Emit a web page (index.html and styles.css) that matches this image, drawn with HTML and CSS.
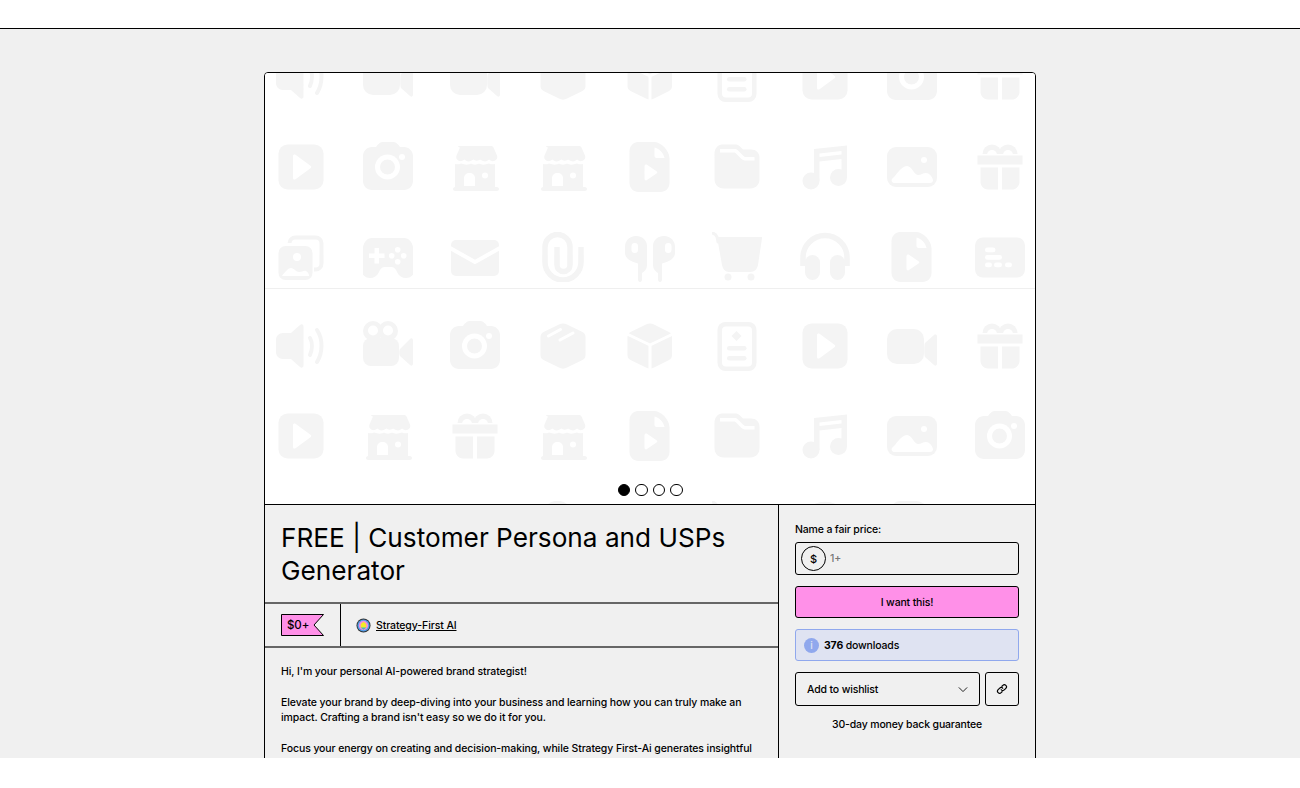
FILE: index.html
```html
<!DOCTYPE html>
<html lang="en">
<head>
  <meta charset="UTF-8" />
  <title>FREE | Customer Persona and USPs Generator</title>
  <link rel="stylesheet" href="styles.css">
</head>
<body>
  <svg class="sprites" width="0" height="0">
    <defs>
      <symbol id="i-play" viewBox="0 0 50 50"><rect x="2.5" y="2.5" width="45" height="45" rx="9"/><path class="cut" d="M17 14c0-1.500 1.500-2 2.500-1.200l15 11c1 .7 1 1.700 0 2.400l-15 11c-1 .8-2.500.3-2.500-1.200z"/></symbol>
      <symbol id="i-camera" viewBox="0 0 50 50"><path d="M9 5h4c2-3 4-5 7-5h10c3 0 5 2 7 5h4c5 0 9 4 9 9v25c0 5-4 9-9 9H9c-5 0-9-4-9-9V14c0-5 4-9 9-9z"/><circle class="cut" cx="24.5" cy="25" r="12.5"/><circle cx="24.5" cy="25" r="7.5"/><circle class="cut" cx="39" cy="15" r="3"/></symbol>
      <symbol id="i-shop" viewBox="0 0 50 50"><path d="M9 4h32c1 0 2 .5 2.500 1.500l3.500 8c1 3-1 5-3 5.500-2 .5-4-.5-5-1.500-1.500 1.500-3.500 2.500-6 1.500-1-.5-2-1-3-1.500-1.500 1.500-5 1.500-6.500 0-1 .5-2 1-3 1.500-2.500 1-4.500 0-6-1.500-1 1-3 2-5 1.500-2-.5-4-2.500-3-5.500l3.500-8C7 4.500 8 4 9 4z"/><path d="M5 22c2 .5 4 .5 6-.5 4 1.500 8 1.500 10 0 2 1.500 6 1.500 8 0 2 1.500 6 1.500 10 0 2 1 4 1 6 .5v23h2c1 0 2 1 2 2s-1 2-2 2H5c-1 0-2-1-2-2s1-2 2-2z"/><path class="cut" d="M14 44V36c0-3 2.500-5 5.500-5s5.500 2 5.500 5v8z"/><circle class="cut" cx="35" cy="33.5" r="3"/></symbol>
      <symbol id="i-file" viewBox="0 0 50 50"><path d="M13 0h16c7 0 15 8 15.500 16v25c0 5-4 9-9 9H13.500c-5 0-9-4-9-9V9c0-5 4-9 8.500-9z"/><path class="cut" d="M29.500 5.500c4 .5 9 5.500 10 10.500h-8c-1 0-2-1-2-2z"/><path class="cut" d="M19.500 24c0-1.500 1.500-2 2.500-1.300l9.500 6.500c1 .7 1 1.700 0 2.400L22 38.100c-1 .7-2.500.2-2.500-1.300z"/></symbol>
      <symbol id="i-folder" viewBox="0 0 50 50"><path d="M10 2.500h13c2 0 3.500.5 5 2l3 3h8c5 0 8.500 3.500 8.500 8v22c0 5-4 9-9 9h-27c-5 0-9-4-9-9v-26c0-5 3.500-9 7.500-9z"/><path class="cut" d="M8 7h15c1 0 2 .5 2.500 1l6 6c.5.5 1.500 1 2.500 1h8.500v3.500H34c-2 0-3.500-.5-5-2l-5.500-5.500c-.5-.5-1-.5-1.500-.5H8z"/></symbol>
      <symbol id="i-music" viewBox="0 0 50 50"><circle cx="11" cy="39" r="8.5"/><circle cx="38.5" cy="35.5" r="8.5"/><path d="M14 7l33-3.500V36h-5.500V17L19.500 19.500V39H14z"/><path class="cut" d="M19.500 11.500l22-2.500v3.500l-22 2.500z"/></symbol>
      <symbol id="i-image" viewBox="0 0 50 50"><rect y="5" width="50" height="40" rx="9"/><path class="cut" d="M5 37c3-2 9-13 15-13 5 0 7 9 11 9 3 0 5-2 8-2s6 3 7 7c0 2-1 3-3 3H8c-3 0-4-2-3-4z"/><circle class="cut" cx="37" cy="18" r="3"/></symbol>
      <symbol id="i-gift" viewBox="0 0 50 50"><circle cx="17" cy="12" r="9.5"/><circle cx="33" cy="12" r="9.5"/><circle class="cut" cx="17" cy="13" r="5"/><circle class="cut" cx="33" cy="13" r="5"/><rect class="cut" y="12" width="50" height="14"/><rect x="2.5" y="13.5" width="45" height="9"/><path d="M5.500 25.500h17.500v22h-10c-4 0-7.500-3.500-7.500-7.500zM27 25.500h17.500V40c0 4-3.500 7.500-7.500 7.500H27z"/></symbol>
      <symbol id="i-speaker" viewBox="0 0 50 50"><path d="M7 12h8l9-8c1.500-1.500 3.500-.5 3.500 1.500v39c0 2-2 3-3.500 1.500l-9-8H7c-4 0-7-3-7-7V19c0-4 3-7 7-7z"/><path class="line" d="M34 17c2.500 4 2.500 11 0 17"/><path class="line" d="M41 9c6 9 6 22 0 32"/></symbol>
      <symbol id="i-moviecam" viewBox="0 0 50 50"><circle cx="10" cy="10" r="10"/><circle cx="25" cy="10" r="10"/><circle class="cut" cx="10" cy="9.5" r="5"/><circle class="cut" cx="25" cy="9.5" r="5"/><rect y="17" width="36" height="28" rx="8"/><path d="M37 28l10-10c1.500-1.500 3-.5 3 1.500v23c0 2-1.500 3-3 1.500l-10-9c-1-1-1-6 0-7z"/></symbol>
      <symbol id="i-video" viewBox="0 0 50 50"><rect y="8" width="37" height="35" rx="10"/><path d="M38 22l9-8c1.500-1 3-.5 3 1.500v27c0 2-1.500 3-3 1.500l-9-8c-1-1-1-13 0-14z"/></symbol>
      <symbol id="i-box" viewBox="0 0 50 50"><path d="M21 3.500c2.500-1.500 5.500-1.500 8 0l15.500 7.500c2 1 3 3 3 5v18c0 2-1 4-3 5L29 46.500c-2.500 1.500-5.500 1.500-8 0L5.500 39c-2-1-3-3-3-5V16c0-2 1-4 3-5z"/><path class="line white thin" d="M10.500 15l12-6.500M22 19l13-7"/></symbol>
      <symbol id="i-cube" viewBox="0 0 50 50"><path d="M21 3.500c2.500-1.500 5.500-1.500 8 0l15 7.500c2 1 3 3 3 5v18c0 2-1 4-3 5L29 46.500c-2.500 1.500-5.500 1.500-8 0L5.500 39c-2-1-3-3-3-5V16c0-2 1-4 3-5z"/><path class="line white thin" d="M25 24V50M25 24L2 13M25 24L48 13"/></symbol>
      <symbol id="i-doc" viewBox="0 0 50 50"><rect x="5.5" y="1" width="39" height="49" rx="8"/><rect class="cut" x="10" y="5.5" width="30" height="40" rx="4"/><path d="M24.500 10l5 5-5 5-5-5z"/><rect x="15" y="25" width="19.5" height="4.5" rx="2.2"/><rect x="15" y="35" width="19.5" height="4.5" rx="2.2"/></symbol>
      <symbol id="i-images" viewBox="0 0 50 50"><rect class="frame" x="13.5" y="5.5" width="32" height="32" rx="6"/><rect class="cut" y="11" width="38" height="40"/><rect x="2.5" y="14" width="34" height="34" rx="7"/><circle class="cut" cx="21" cy="25" r="4"/><path class="cut" d="M6 44c2-3 6-8 9-8 3 0 5 4 8 4 3 0 5-2 7-1 2 1 3 3 3 5H6z"/></symbol>
      <symbol id="i-gamepad" viewBox="0 0 50 50"><path d="M9 6H41C46 6 49 10 50 15L52 36C52.500 42 48 46 43 46C39 46 36 44 34 40C33 37 31 35 28 35H22C19 35 17 37 16 40C14 44 11 46 7 46C2 46-2.500 42-2 36L0 15C1 10 4 6 9 6z"/><path class="cut" d="M11.500 16h4.500v5.500h5.500V26H16v5.500h-4.500V26H6v-4.500h5.500z"/><circle class="cut" cx="34.7" cy="17.7" r="2.8"/><circle class="cut" cx="34.7" cy="29.7" r="2.8"/><circle class="cut" cx="28.7" cy="23.7" r="2.8"/><circle class="cut" cx="40.7" cy="23.7" r="2.8"/></symbol>
      <symbol id="i-mail" viewBox="0 0 50 50"><rect x="1" y="8" width="48" height="36" rx="5"/><path class="line white" d="M0 16l25 14 25-14"/></symbol>
      <symbol id="i-clip" viewBox="0 0 50 50"><path class="line wide" d="M43 15V30A18 18 0 0 1 7 30V15A12.500 12.500 0 0 1 32 15V33A6.500 6.500 0 0 1 19 33V15"/></symbol>
      <symbol id="i-buds" viewBox="0 0 50 50"><path d="M39 4C46 4 50 9 50 15V21C50 26 44 30 37 31.500V47Q37 50 35 50Q33 50 33 47V41C30 39 28 37 28 33V14C28 8 33 4 39 4z"/><rect class="cut" x="40" y="11" width="6.500" height="10" rx="3.2"/><path d="M11 4C4 4 0 9 0 15V21C0 26 6 30 13 31.500V47Q13 50 15 50Q17 50 17 47V41C20 39 22 37 22 33V14C22 8 17 4 11 4z"/><rect class="cut" x="6.5" y="11" width="6.500" height="10" rx="3.2"/></symbol>
      <symbol id="i-cart" viewBox="0 0 50 50"><path class="line thin" d="M-1 1c3 0 5 1 6 4l1 5"/><path d="M5 5h44.500c.5 0 .5 .5 .5 1l-4 27c-1 4-3 7-8 7H17c-4 0-6-3-7-7z"/><circle cx="16" cy="45" r="3.5"/><circle cx="39" cy="45" r="3.5"/></symbol>
      <symbol id="i-phones" viewBox="0 0 50 50"><path class="line wide" d="M3 34V25.500a22 22 0 0 1 44 0V34"/><rect x="5" y="23" width="15" height="25" rx="7.5"/><rect x="30" y="23" width="15" height="25" rx="7.5"/></symbol>
      <symbol id="i-list" viewBox="0 0 50 50"><rect y="5.5" width="50" height="40" rx="8"/><rect class="cut" x="10" y="15.5" width="10.5" height="4.8" rx="2.4"/><rect class="cut" x="10" y="23" width="17" height="4.8" rx="2.4"/><rect class="cut" x="10" y="30.5" width="7" height="4.8" rx="2.4"/><rect class="cut" x="19" y="30.5" width="8" height="4.8" rx="2.4"/><rect class="cut" x="30" y="30.5" width="7" height="4.8" rx="2.4"/></symbol>
    </defs>
  </svg>

  <div class="page">
    <div class="top-bar"></div>
    <main class="shell">
      <article class="product">

        <!-- Cover carousel -->
        <div class="cover">
          <div class="tile tile-first">
            <div class="icon-row">
              <svg class="ico"><use href="#i-speaker"/></svg><svg class="ico"><use href="#i-video"/></svg><svg class="ico"><use href="#i-video"/></svg><svg class="ico"><use href="#i-box"/></svg><svg class="ico"><use href="#i-cube"/></svg><svg class="ico"><use href="#i-doc"/></svg><svg class="ico"><use href="#i-play"/></svg><svg class="ico"><use href="#i-camera"/></svg><svg class="ico"><use href="#i-gift"/></svg>
            </div>
            <div class="icon-row">
              <svg class="ico"><use href="#i-play"/></svg><svg class="ico"><use href="#i-camera"/></svg><svg class="ico"><use href="#i-shop"/></svg><svg class="ico"><use href="#i-shop"/></svg><svg class="ico"><use href="#i-file"/></svg><svg class="ico"><use href="#i-folder"/></svg><svg class="ico"><use href="#i-music"/></svg><svg class="ico"><use href="#i-image"/></svg><svg class="ico"><use href="#i-gift"/></svg>
            </div>
            <div class="icon-row">
              <svg class="ico"><use href="#i-images"/></svg><svg class="ico"><use href="#i-gamepad"/></svg><svg class="ico"><use href="#i-mail"/></svg><svg class="ico"><use href="#i-clip"/></svg><svg class="ico"><use href="#i-buds"/></svg><svg class="ico"><use href="#i-cart"/></svg><svg class="ico"><use href="#i-phones"/></svg><svg class="ico"><use href="#i-file"/></svg><svg class="ico"><use href="#i-list"/></svg>
            </div>
          </div>
          <div class="tile tile-second">
            <div class="icon-row">
              <svg class="ico"><use href="#i-speaker"/></svg><svg class="ico"><use href="#i-moviecam"/></svg><svg class="ico"><use href="#i-camera"/></svg><svg class="ico"><use href="#i-box"/></svg><svg class="ico"><use href="#i-cube"/></svg><svg class="ico"><use href="#i-doc"/></svg><svg class="ico"><use href="#i-play"/></svg><svg class="ico"><use href="#i-video"/></svg><svg class="ico"><use href="#i-gift"/></svg>
            </div>
            <div class="icon-row">
              <svg class="ico"><use href="#i-play"/></svg><svg class="ico"><use href="#i-shop"/></svg><svg class="ico"><use href="#i-gift"/></svg><svg class="ico"><use href="#i-shop"/></svg><svg class="ico"><use href="#i-file"/></svg><svg class="ico"><use href="#i-folder"/></svg><svg class="ico"><use href="#i-music"/></svg><svg class="ico"><use href="#i-image"/></svg><svg class="ico"><use href="#i-camera"/></svg>
            </div>
            <div class="icon-row">
              <svg class="ico"><use href="#i-images"/></svg><svg class="ico"><use href="#i-gamepad"/></svg><svg class="ico"><use href="#i-mail"/></svg><svg class="ico"><use href="#i-clip"/></svg><svg class="ico"><use href="#i-buds"/></svg><svg class="ico"><use href="#i-cart"/></svg><svg class="ico"><use href="#i-phones"/></svg><svg class="ico"><use href="#i-file"/></svg><svg class="ico"><use href="#i-list"/></svg>
            </div>
          </div>
          <div class="dots">
            <span class="dot active"></span>
            <span class="dot"></span>
            <span class="dot"></span>
            <span class="dot"></span>
          </div>
        </div>

        <div class="details">
          <div class="info">
            <h1 class="title">FREE | Customer Persona and USPs Generator</h1>

            <div class="meta">
              <div class="meta-price">
                <div class="tag">
                  <svg class="tag-shape" viewBox="0 0 43 22"><path d="M.5.5h42L33 11l9.500 10.500H.5z"/></svg>
                  <span class="tag-text">$0+</span>
                </div>
              </div>
              <div class="meta-author">
                <svg class="avatar" viewBox="0 0 16 16">
                  <circle cx="8" cy="8" r="7.5" fill="#333"/>
                  <circle cx="8" cy="8" r="6.5" fill="#4f9fe8"/>
                  <circle cx="8" cy="8" r="5" fill="#f58ae0"/>
                  <path d="M8 4l3 2.500V10L8 12 5 10V6.500z" fill="#f4e82a"/>
                  <path d="M5 10h6l-3 2.500z" fill="#3fb6c9"/>
                </svg>
                <a class="author-link" href="#">Strategy-First AI</a>
              </div>
            </div>

            <div class="desc">
              <p>Hi, I'm your personal AI-powered brand strategist!</p>
              <p>Elevate your brand by deep-diving into your business and learning how you can truly make an impact. Crafting a brand isn't easy so we do it for you.</p>
              <p>Focus your energy on creating and decision-making, while Strategy First-Ai generates insightful customer persona and positioning statements tailored to your business and audience.</p>
            </div>
          </div>

          <aside class="buy">
            <label class="price-label" for="price">Name a fair price:</label>
            <div class="price-input">
              <span class="currency">$</span>
              <input id="price" class="price-field" type="text" placeholder="1+">
            </div>
            <a class="want-btn" href="#">I want this!</a>
            <div class="downloads">
              <span class="info-dot">i</span>
              <span><b>376</b> downloads</span>
            </div>
            <div class="wish-row">
              <div class="wish-btn">
                <span>Add to wishlist</span>
                <svg class="chevron" viewBox="0 0 12 8"><path d="M1 1.500l5 5 5-5"/></svg>
              </div>
              <div class="link-btn">
                <svg class="chain" viewBox="0 0 24 24"><path d="M10.500 13.500a4 4 0 0 0 6 .4l3.200-3.200a4.200 4.200 0 0 0-6-6l-1.800 1.800"/><path d="M13.500 10.500a4 4 0 0 0-6-.4l-3.200 3.200a4.200 4.200 0 0 0 6 6l1.800-1.800"/></svg>
              </div>
            </div>
            <p class="guarantee">30-day money back guarantee</p>
          </aside>
        </div>
      </article>
    </main>
  </div>
</body>
</html>
```

FILE: styles.css
```css
html, body {
  margin: 0;
  padding: 0;
  background: #fff;
  color: #000;
  font-family: Inter, "Liberation Sans", Arial, sans-serif;
}

.sprites {
  position: absolute;
}

.page {
  height: 758px;
  overflow: hidden;
  background: #f0f0f0;
}

.top-bar {
  height: 28px;
  background: #fff;
  border-bottom: 1px solid #000;
}

.shell {
  padding-top: 43px;
}

.product {
  width: 770px;
  margin: 0 auto;
  background: #f0f0f0;
  border: 1px solid #000;
  border-radius: 4px;
}

/* cover */
.cover {
  position: relative;
  height: 431px;
  overflow: hidden;
  background: #fff;
  border-radius: 3px 3px 0 0;
  border-bottom: 1px solid #000;
}

.tile {
  display: flex;
  flex-direction: column;
  gap: 40px;
  padding: 0 10.5px;
  overflow: hidden;
}

.tile-first {
  height: 209px;
  padding-bottom: 6px;
  justify-content: flex-end;
  border-bottom: 1px solid #efefef;
}

.tile-second {
  padding-top: 32px;
}

.icon-row {
  display: flex;
  flex: none;
  justify-content: space-between;
  height: 50px;
}

.ico {
  width: 50px;
  height: 50px;
  overflow: visible;
  fill: #f4f4f4;
}

.cut {
  fill: #fff;
}

.line {
  fill: none;
  stroke: #f4f4f4;
  stroke-width: 4;
  stroke-linecap: round;
}

.line.white {
  stroke: #fff;
}

.line.wide {
  stroke-width: 5.5;
  stroke-linecap: butt;
}

.line.thin {
  stroke-width: 3;
}

.frame {
  fill: none;
  stroke: #f4f4f4;
  stroke-width: 4;
}

.dots {
  position: absolute;
  left: 0;
  right: 0;
  bottom: 8px;
  display: flex;
  justify-content: center;
  gap: 5px;
}

.dot {
  width: 10.5px;
  height: 10.5px;
  border: 1px solid #000;
  border-radius: 50%;
  background: #fff;
}

.dot.active {
  background: #000;
}

/* below the cover */
.details {
  display: flex;
  align-items: stretch;
  font-weight: 500;
  letter-spacing: -0.1px;
}

.info {
  width: 513px;
  flex: none;
  border-right: 1px solid #000;
}

.title {
  margin: 0;
  padding: 16px 16px 15px;
  font-size: 26.2px;
  line-height: 33px;
  font-weight: 400;
  letter-spacing: 0;
  border-bottom: 2px solid #666;
}

.meta {
  display: flex;
  height: 42px;
  border-bottom: 2px solid #666;
}

.meta-price {
  display: flex;
  align-items: center;
  width: 59px;
  padding: 0 0 0 16px;
  border-right: 1px solid #000;
}

.tag {
  position: relative;
  width: 43px;
  height: 22px;
  display: flex;
  align-items: center;
}

.tag-shape {
  position: absolute;
  left: 0;
  top: 0;
  width: 43px;
  height: 22px;
  fill: #ff90e8;
  stroke: #000;
}

.tag-text {
  position: relative;
  padding-left: 6px;
  font-size: 11.5px;
}

.meta-author {
  display: flex;
  align-items: center;
  gap: 5px;
  padding-left: 15px;
  font-size: 10.5px;
}

.avatar {
  width: 15px;
  height: 15px;
}

.author-link {
  color: #000;
  text-decoration: underline;
}

.desc {
  padding: 16px;
  font-size: 10.5px;
  line-height: 15px;
}

.desc p {
  margin: 0 0 16px;
}

.buy {
  flex: 1;
  padding: 18px 16px 16px;
  font-size: 10.5px;
  letter-spacing: -0.16px;
  display: flex;
  flex-direction: column;
}

.price-label {
  line-height: 14px;
  margin-bottom: 5px;
}

.price-input {
  display: flex;
  align-items: center;
  height: 31px;
  border: 1px solid #000;
  border-radius: 3px;
  padding-left: 5px;
  gap: 4px;
  margin-bottom: 11px;
}

.currency {
  display: flex;
  align-items: center;
  justify-content: center;
  width: 23px;
  height: 23px;
  border: 1px solid #000;
  border-radius: 50%;
  font-size: 11px;
}

.price-field {
  flex: 1;
  min-width: 0;
  border: 0;
  padding: 0;
  background: transparent;
  font: inherit;
  outline: none;
}

.price-field::placeholder {
  color: #777;
}

.want-btn {
  display: flex;
  align-items: center;
  justify-content: center;
  height: 30px;
  background: #ff90e8;
  border: 1px solid #000;
  border-radius: 3px;
  color: #000;
  text-decoration: none;
  margin-bottom: 11px;
}

.downloads {
  display: flex;
  align-items: center;
  gap: 5px;
  height: 30px;
  padding-left: 8px;
  background: #dfe3f2;
  border: 1px solid #90a8ed;
  border-radius: 3px;
  margin-bottom: 11px;
}

.info-dot {
  display: flex;
  align-items: center;
  justify-content: center;
  width: 15px;
  height: 15px;
  border-radius: 50%;
  background: #90a8ed;
  color: #dfe3f2;
  font-size: 10px;
}

.downloads b {
  font-weight: 700;
}

.wish-row {
  display: flex;
  gap: 5px;
}

.wish-btn {
  flex: 1;
  display: flex;
  align-items: center;
  justify-content: space-between;
  height: 32px;
  padding: 0 11px;
  border: 1px solid #000;
  border-radius: 3px;
}

.chevron {
  width: 10px;
  height: 7px;
  fill: none;
  stroke: #222;
  stroke-width: 1.2;
}

.link-btn {
  display: flex;
  align-items: center;
  justify-content: center;
  width: 32px;
  height: 32px;
  border: 1px solid #000;
  border-radius: 3px;
}

.chain {
  width: 12px;
  height: 12px;
  fill: none;
  stroke: #000;
  stroke-width: 2.4;
  stroke-linecap: round;
}

.guarantee {
  margin: 12px 0 0;
  text-align: center;
  line-height: 14px;
}
```
